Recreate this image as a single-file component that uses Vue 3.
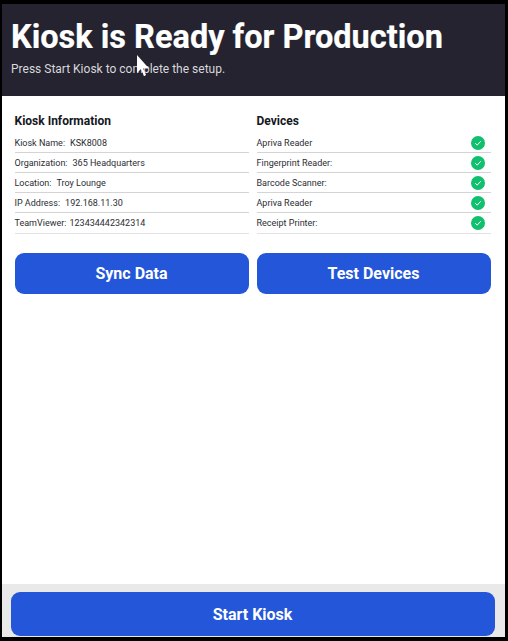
<script setup>
const kioskInfo = [
  { label: 'Kiosk Name:', value: 'KSK8008' },
  { label: 'Organization:', value: '365 Headquarters' },
  { label: 'Location:', value: 'Troy Lounge' },
  { label: 'IP Address:', value: '192.168.11.30' },
  { label: 'TeamViewer:', value: '123434442342314', tight: true }
]

const devices = ['Apriva Reader', 'Fingerprint Reader:', 'Barcode Scanner:', 'Apriva Reader', 'Receipt Printer:']
</script>

<template>
  <div class="frame">
    <div class="screen">
      <header class="header">
        <h1 class="title">Kiosk is Ready for Production</h1>
        <p class="subtitle">Press Start Kiosk to complete the setup.</p>
      </header>

      <main class="content">
        <section class="column">
          <h2 class="section-title">Kiosk Information</h2>
          <ul class="rows">
            <li v-for="item in kioskInfo" :key="item.label" class="row">
              <span :class="item.tight ? 'label-tight' : 'label'">{{ item.label }}</span>
              <span>{{ item.value }}</span>
            </li>
          </ul>
          <button class="btn-action">Sync Data</button>
        </section>

        <section class="column">
          <h2 class="section-title">Devices</h2>
          <ul class="rows">
            <li v-for="(device, i) in devices" :key="i" class="row row-device">
              <span>{{ device }}</span>
              <svg class="check" width="14" height="14" viewBox="0 0 14 14">
                <circle cx="7" cy="7" r="7" fill="#10c06e" />
                <path d="M4.2 7.2l2 1.9 3.6-3.9" fill="none" stroke="#fff" stroke-width="1" />
              </svg>
            </li>
          </ul>
          <button class="btn-action">Test Devices</button>
        </section>
      </main>

      <footer class="footer">
        <button class="btn-start">Start Kiosk</button>
      </footer>

      <svg class="cursor" width="14" height="22" viewBox="0 0 14 22">
        <path d="M1 0v18l4-4 3 7 2-1-3-6.500h6z" fill="#fff" />
      </svg>
    </div>
  </div>
</template>

<style>
html,
body {
  margin: 0;
  background: #000;
}
</style>

<style scoped>
.frame {
  width: 508px;
  height: 641px;
  box-sizing: border-box;
  padding: 4px 3px 4px 2px;
  background: #000;
  font-family: Roboto, "Liberation Sans", sans-serif;
}

.screen {
  position: relative;
  display: flex;
  flex-direction: column;
  height: 100%;
  background: #fff;
}

.header {
  height: 92px;
  box-sizing: border-box;
  padding: 15px 9px 0;
  background: #24232f;
  color: #fff;
}

.title {
  margin: 0;
  font-size: 32.5px;
  line-height: 37px;
  font-weight: 700;
  -webkit-text-stroke: 0.2px #fff;
}

.subtitle {
  margin: 5px 0 0;
  font-size: 12px;
  line-height: 16px;
  color: #d8d8dc;
}

.content {
  flex: 1;
  display: grid;
  grid-template-columns: 234px 234px;
  gap: 8px;
  align-content: start;
  padding: 17px 12.5px 0;
}

.section-title {
  margin: 0 0 3px;
  font-size: 12px;
  line-height: 17px;
  font-weight: 700;
  color: #14171c;
}

.rows {
  margin: 0;
  padding: 0;
  list-style: none;
}

.row {
  height: 20px;
  box-sizing: border-box;
  display: flex;
  align-items: center;
  border-bottom: 1px solid #d4d4d6;
  font-size: 9px;
  color: #2b2d33;
}

.row:last-child {
  height: 21px;
  border-bottom-color: #e2e2e4;
}

.row-device {
  justify-content: space-between;
  padding-right: 6px;
}

.label {
  margin-right: 5px;
}

.label-tight {
  margin-right: 3px;
}

.check {
  flex: none;
}

.btn-action {
  display: block;
  width: 100%;
  height: 41px;
  margin-top: 19px;
  border: 0;
  border-radius: 9px;
  background: #2456d9;
  color: #fff;
  font-family: inherit;
  font-size: 16px;
  font-weight: 700;
}

.footer {
  height: 53px;
  box-sizing: border-box;
  padding: 8px 10.5px 1px 8.5px;
  background: #e9e9e9;
}

.btn-start {
  display: block;
  width: 100%;
  height: 44px;
  border: 0;
  border-radius: 9px;
  background: #2456d9;
  color: #fff;
  font-family: inherit;
  font-size: 16px;
  font-weight: 700;
}

.cursor {
  position: absolute;
  left: 134px;
  top: 51px;
}
</style>
